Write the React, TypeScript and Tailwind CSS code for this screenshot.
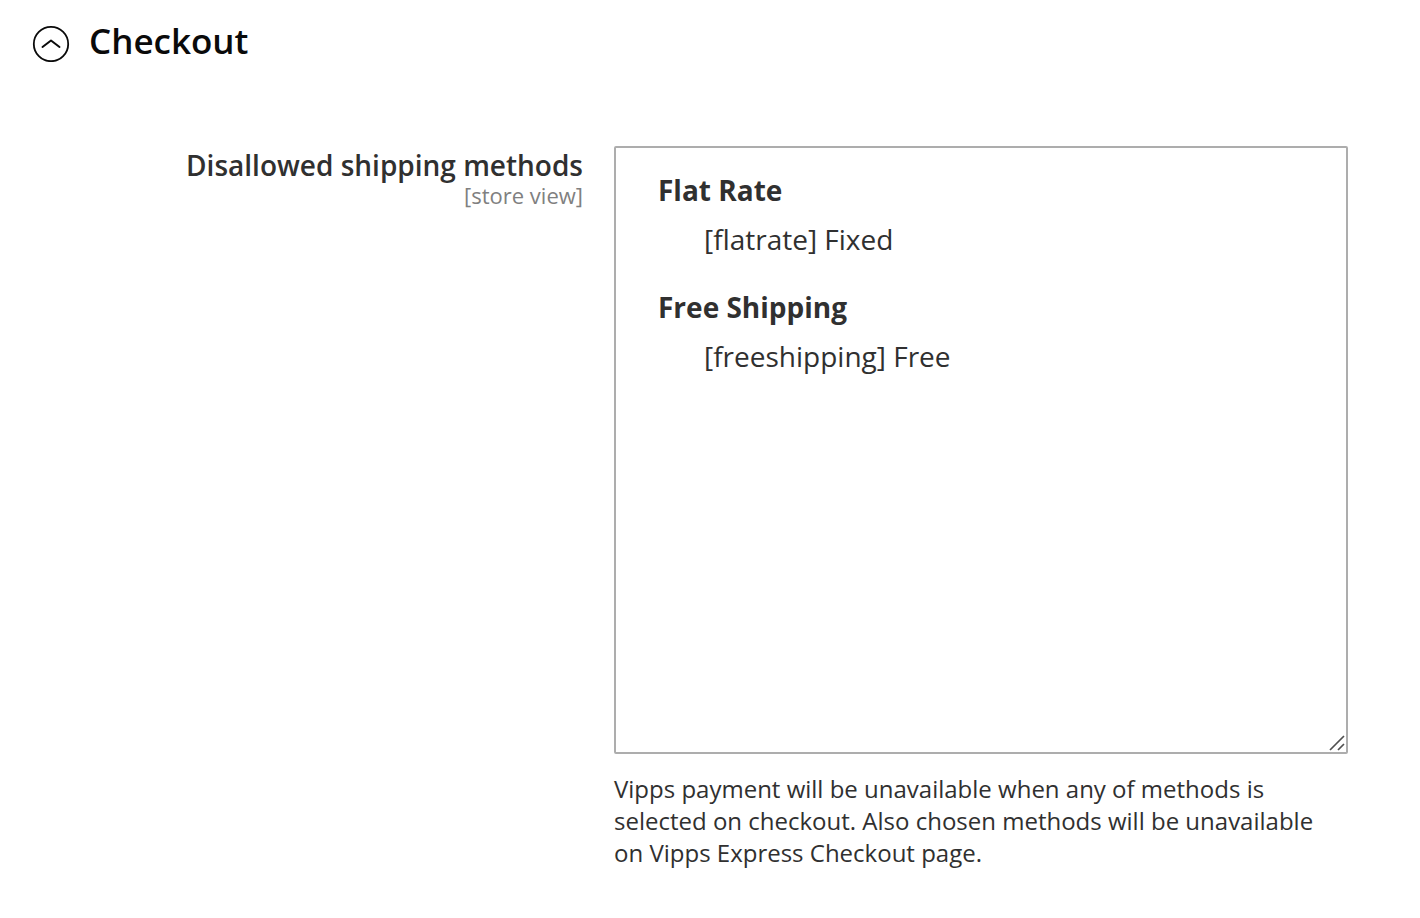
export default function App() {
  return (
    <main className="min-h-screen bg-white px-8 pt-[19px] pb-10 font-['Open_Sans',sans-serif] text-[#303030]">
      <h2 className="text-[35px] leading-[44px] font-semibold text-[#0a0a0a]">
        <button type="button" aria-expanded="true" className="flex items-center gap-[19px]">
          <svg className="mt-1 size-[38px]" viewBox="0 0 38 38" fill="none" stroke="currentColor" aria-hidden="true">
            <circle cx="19" cy="20" r="17.2" strokeWidth="1.8" />
            <path d="M10.5 23 L19 16.5 L27.5 23" strokeWidth="2" strokeLinecap="round" strokeLinejoin="round" />
          </svg>
          Checkout
        </button>
      </h2>
      <div className="mt-[83px] mr-10 flex items-start gap-[31px]">
        <label htmlFor="methods" className="w-[551px] shrink-0 pt-[3px] text-right">
          <span className="block text-[28px] leading-8 font-semibold">Disallowed shipping methods</span>
          <span className="block text-[22px] leading-7 text-[#808080]">[store view]</span>
        </label>
        <div className="min-w-0 flex-1">
          <div className="relative">
            <select
              id="methods"
              multiple
              aria-describedby="methods-note"
              className="block h-[608px] w-full appearance-none rounded-[2px] border-2 border-[#adadad] bg-white px-5 py-[23px] text-[28px] outline-none"
            >
              <optgroup label="Flat Rate" className="mb-5 px-5 font-bold">
                <option className="px-12 py-2.5 font-normal">[flatrate] Fixed</option>
              </optgroup>
              <optgroup label="Free Shipping" className="px-5 font-bold">
                <option className="px-12 py-2.5 font-normal">[freeshipping] Free</option>
              </optgroup>
            </select>
            <svg className="absolute right-[3px] bottom-[3px] size-4" viewBox="0 0 16 16" fill="none" stroke="#505050" strokeWidth="1.7" aria-hidden="true">
              <path d="M1 15 L15 1 M9 15 L15 9" />
            </svg>
          </div>
          <p id="methods-note" className="mt-[19px] text-2xl leading-8">
            Vipps payment will be unavailable when any of methods is selected on checkout. Also chosen methods will be unavailable on Vipps Express Checkout page.
          </p>
        </div>
      </div>
    </main>
  );
}
